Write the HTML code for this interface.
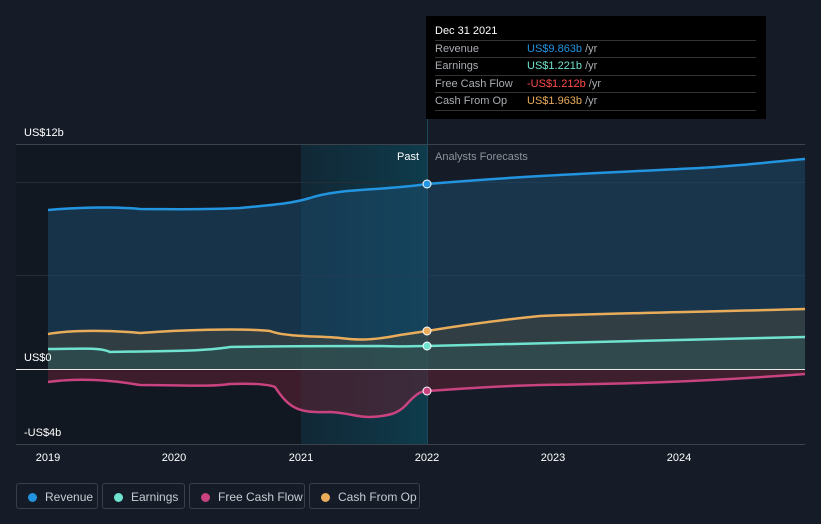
<!DOCTYPE html>
<html><head><meta charset="utf-8"><style>
html,body{margin:0;padding:0;background:#151c27;width:821px;height:524px;overflow:hidden;font-family:"Liberation Sans",sans-serif;}
svg{position:absolute;left:0;top:0}
.tt{position:absolute;left:426px;top:16px;width:340px;height:103px;background:#000;color:#fff;font-size:11px}
.tt .h{position:absolute;left:9px;top:9px;font-size:11px}
.tt .r{position:absolute;left:9px;width:321px;height:17px;border-top:1px solid #333;line-height:17px}
.tt .r span{position:absolute;left:92px}
.lab{color:#a9adb3}
.leg{position:absolute;top:483px;height:26px;border:1px solid #3a404b;border-radius:3px;color:#c8ccd2;font-size:12px;line-height:26px;box-sizing:border-box}
.leg i{position:absolute;left:11px;top:9px;width:9px;height:9px;border-radius:50%}
.leg b{font-weight:normal;position:absolute;left:28px}
</style></head><body>
<svg width="821" height="524">
<defs>
<linearGradient id="pb" x1="0" x2="1"><stop offset="0" stop-color="#0f3040" stop-opacity=".6"/><stop offset="1" stop-color="#0d4050" stop-opacity=".9"/></linearGradient>
</defs>
<rect x="16" y="144" width="285" height="300" fill="#121821"/>
<rect x="301" y="144" width="126" height="300" fill="url(#pb)"/>
<line x1="16" y1="144.5" x2="805" y2="144.5" stroke="#3d434d"/>
<line x1="16" y1="182.5" x2="805" y2="182.5" stroke="#262d38"/>
<line x1="16" y1="275.5" x2="805" y2="275.5" stroke="#262d38"/>
<line x1="16" y1="444.5" x2="805" y2="444.5" stroke="#3d434d"/>
<line x1="427.5" y1="16" x2="427.5" y2="444" stroke="#1d4a5a"/>
<!-- revenue area -->
<path d="M48,210 C70,208 110,206 140,209 C170,209 200,210 240,208 C270,205 290,204 310,198 C340,188 380,191 427,184 C520,176 620,172 700,168 C750,165 780,161 805,159 L805,369 L48,369Z" fill="#1b4a6c" opacity=".55"/>
<!-- cfo / earnings area -->
<path d="M48,334 C70,330 110,330 140,333 C180,330 240,328 270,331 C285,337 320,336 340,338 C355,340 370,341 400,335 L427,331 C470,324 500,320 540,316 C620,313 700,312 805,309 L805,369 L48,369Z" fill="#4a4a3e" opacity=".5"/>
<path d="M48,349 C80,349 100,347 110,352 C150,351 200,352 230,347 C280,346 340,346 380,346 C400,347 410,346 427,346 L805,337 L805,369 L48,369Z" fill="#2e5a58" opacity=".4"/>
<!-- fcf area -->
<path d="M48,369 L48,382 C70,379 100,378 140,385 C180,385 210,387 230,384 C260,383 270,385 275,387 C290,410 300,413 330,412 C350,413 355,417 370,417 C390,416 398,413 405,406 C415,395 420,391 427,391 C470,388 500,386 540,385 C620,384 700,382 805,374 L805,369Z" fill="#5a2232" opacity=".6"/>
<line x1="16" y1="369.5" x2="805" y2="369.5" stroke="#e8e8e8" stroke-width="1"/>
<path d="M48,210 C70,208 110,206 140,209 C170,209 200,210 240,208 C270,205 290,204 310,198 C340,188 380,191 427,184 C520,176 620,172 700,168 C750,165 780,161 805,159" fill="none" stroke="#2394df" stroke-width="2.5"/>
<path d="M48,334 C70,330 110,330 140,333 C180,330 240,328 270,331 C285,337 320,336 340,338 C355,340 370,341 400,335 L427,331 C470,324 500,320 540,316 C620,313 700,312 805,309" fill="none" stroke="#e9ac5b" stroke-width="2.5"/>
<path d="M48,349 C80,349 100,347 110,352 C150,351 200,352 230,347 C280,346 340,346 380,346 C400,347 410,346 427,346 L805,337" fill="none" stroke="#6fe3cf" stroke-width="2.5"/>
<path d="M48,382 C70,379 100,378 140,385 C180,385 210,387 230,384 C260,383 270,385 275,387 C290,410 300,413 330,412 C350,413 355,417 370,417 C390,416 398,413 405,406 C415,395 420,391 427,391 C470,388 500,386 540,385 C620,384 700,382 805,374" fill="none" stroke="#c8437f" stroke-width="2.5"/>
<circle cx="427" cy="184" r="4" fill="#2394df" stroke="#fff" stroke-width="1"/>
<circle cx="427" cy="331" r="4" fill="#e9ac5b" stroke="#fff" stroke-width="1"/>
<circle cx="427" cy="346" r="4" fill="#6fe3cf" stroke="#fff" stroke-width="1"/>
<circle cx="427" cy="391" r="4" fill="#c8437f" stroke="#fff" stroke-width="1"/>
<g font-size="11" fill="#fff" font-family="Liberation Sans, sans-serif">
<text x="24" y="136">US$12b</text>
<text x="24" y="361">US$0</text>
<text x="24" y="436">-US$4b</text>
<text x="419" y="160" text-anchor="end">Past</text>
<text x="435" y="160" fill="#8d939b">Analysts Forecasts</text>
<g text-anchor="middle"><text x="48" y="461">2019</text><text x="174" y="461">2020</text><text x="301" y="461">2021</text><text x="427" y="461">2022</text><text x="553" y="461">2023</text><text x="679" y="461">2024</text></g>
</g>
</svg>
<div class="tt">
<div class="h">Dec 31 2021</div>
<div class="r lab" style="top:24px">Revenue<span><span style="position:static;color:#2394df">US$9.863b</span> /yr</span></div>
<div class="r lab" style="top:41px">Earnings<span><span style="position:static;color:#6fe3cf">US$1.221b</span> /yr</span></div>
<div class="r lab" style="top:59px">Free Cash Flow<span><span style="position:static;color:#ff4a4a">-US$1.212b</span> /yr</span></div>
<div class="r lab" style="top:76px">Cash From Op<span><span style="position:static;color:#e9ac5b">US$1.963b</span> /yr</span></div>
<div style="position:absolute;left:9px;top:94px;width:321px;border-top:1px solid #333"></div>
</div>
<div class="leg" style="left:16px;width:82px"><i style="background:#2394df"></i><b>Revenue</b></div>
<div class="leg" style="left:102px;width:83px"><i style="background:#6fe3cf"></i><b>Earnings</b></div>
<div class="leg" style="left:189px;width:116px"><i style="background:#c8437f"></i><b>Free Cash Flow</b></div>
<div class="leg" style="left:309px;width:111px"><i style="background:#e9ac5b"></i><b>Cash From Op</b></div>
</body></html>
